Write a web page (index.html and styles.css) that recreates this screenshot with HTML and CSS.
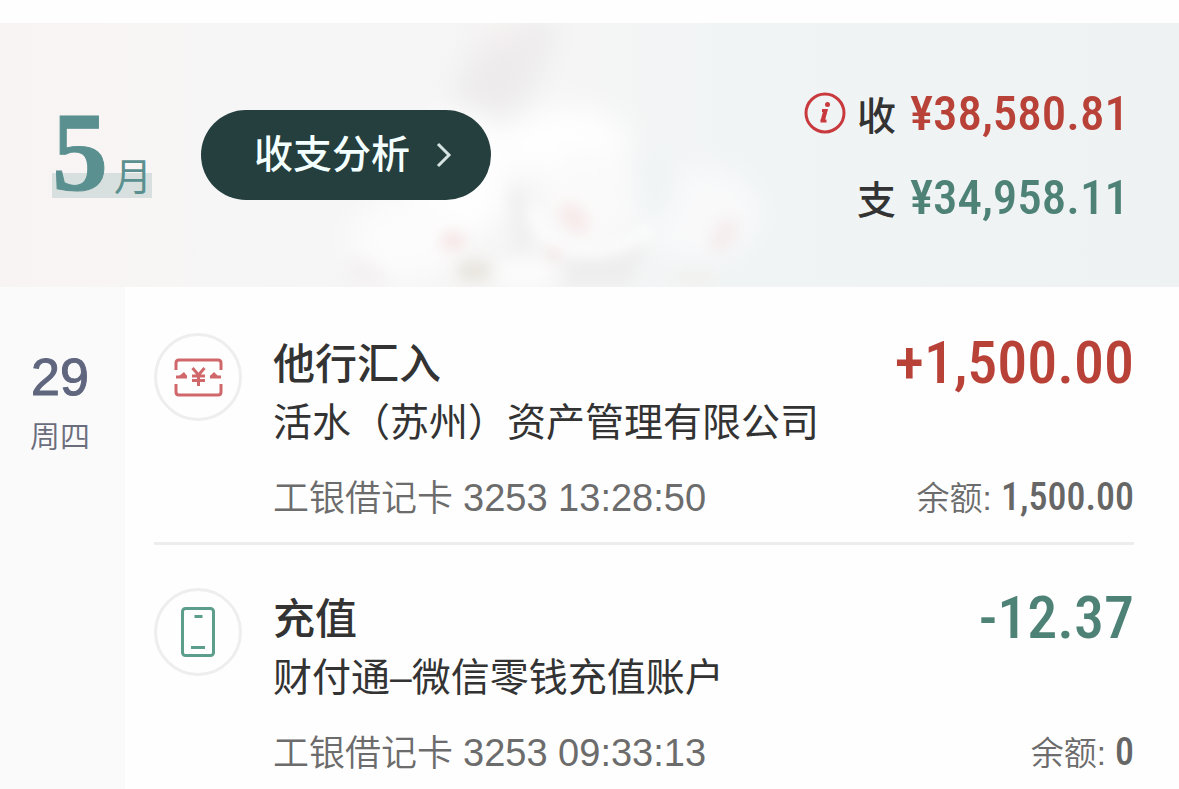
FILE: index.html
```html
<!DOCTYPE html>
<html lang="zh-CN">
<head>
<meta charset="utf-8">
<meta name="viewport" content="width=device-width, initial-scale=1">
<title>收支明细</title>
<link rel="stylesheet" href="styles.css">
</head>
<body>
<header class="summary">
  <svg class="flowers" viewBox="0 0 1179 264" preserveAspectRatio="none" aria-hidden="true">
    <defs>
      <filter id="soft" x="-50%" y="-50%" width="200%" height="200%"><feGaussianBlur stdDeviation="14"/></filter>
      <filter id="fine" x="-50%" y="-50%" width="200%" height="200%"><feGaussianBlur stdDeviation="7"/></filter>
    </defs>
    <g filter="url(#soft)">
      <path d="M490 0h70l-40 90-80 10z" fill="#edebec"/>
      <ellipse cx="500" cy="12" rx="22" ry="12" fill="#f7f0f1"/>
      <ellipse cx="460" cy="150" rx="50" ry="66" fill="#fefefe"/>
      <ellipse cx="565" cy="120" rx="64" ry="36" fill="#fefefe"/>
      <ellipse cx="405" cy="215" rx="55" ry="42" fill="#fdfcfc"/>
      <ellipse cx="590" cy="175" rx="50" ry="48" fill="#fbfafa"/>
      <ellipse cx="700" cy="190" rx="60" ry="45" fill="#f9f9fa"/>
      <ellipse cx="655" cy="165" rx="18" ry="34" fill="#edf3f4"/>
    </g>
    <g filter="url(#fine)">
      <path d="M510 165l14 0 8 60-18 10z" fill="#f1f0f1"/>
      <path d="M570 228l78-10-18 46h-66z" fill="#eeeeef"/>
      <ellipse cx="453" cy="218" rx="13" ry="10" fill="#f6e6e6"/>
      <ellipse cx="574" cy="195" rx="18" ry="12" fill="#f7eaea" transform="rotate(45 574 195)"/>
      <ellipse cx="555" cy="230" rx="9" ry="7" fill="#f3e4e4"/>
      <ellipse cx="724" cy="212" rx="12" ry="20" fill="#f5edee" transform="rotate(30 724 212)"/>
      <ellipse cx="474" cy="248" rx="18" ry="11" fill="#e9e6df"/>
      <ellipse cx="695" cy="255" rx="22" ry="8" fill="#f2f1ee"/>
      <path d="M350 235q30 5 40 25h-42z" fill="#f4f1f2"/>
      <ellipse cx="525" cy="250" rx="30" ry="16" fill="#fcfbfb"/>
      <path d="M530 185q20 45 60 44t60-24" fill="none" stroke="#fefefe" stroke-width="10"/>
    </g>
  </svg>
  <h1 class="month"><span class="month-number">5</span><span class="month-unit">月</span></h1>
  <button class="analysis" type="button">收支分析
    <svg class="chevron" viewBox="0 0 16 26" aria-hidden="true"><path d="M2 2l11 11L2 24"/></svg>
  </button>
  <dl class="totals">
    <div class="total income">
      <dt><svg class="info" viewBox="0 0 42 42" aria-hidden="true"><circle cx="21" cy="21" r="19"/><path d="M18 18.500h4l-3 10.500M16.500 29h6"/><path d="M21.500 18l-3 11" stroke-width="4"/><circle class="dot" cx="23.500" cy="12.500" r="2.500"/></svg>收</dt>
      <dd>¥38,580.81</dd>
    </div>
    <div class="total expense">
      <dt>支</dt>
      <dd>¥34,958.11</dd>
    </div>
  </dl>
</header>
<main class="day">
  <div class="date"><span class="date-number">29</span><span class="date-week">周四</span></div>
  <ul class="entries">
    <li class="entry">
      <span class="badge">
        <svg class="icon income-icon" viewBox="0 0 88 88" aria-hidden="true"><path d="M22 37v-7q0-3 3-3h39q3 0 3 3v7M22 51v8q0 3 3 3h39q3 0 3-3v-8"/><path d="M22 44h11M56 44h11M38.500 35l6 7 6-7M38 43h13M38 47.500h13M44.500 42v11"/><path class="fill" d="M25 43l5-4 3 4zM56 43l4-4 4 4z"/></svg>
      </span>
      <div class="detail">
        <div class="line"><h2 class="title">他行汇入</h2><strong class="amount income">+1,500.00</strong></div>
        <p class="party">活水（苏州）资产管理有限公司</p>
        <div class="line meta"><span class="card">工银借记卡 <span class="digits">3253 13:28:50</span></span><span class="balance">余额: <b>1,500.00</b></span></div>
      </div>
    </li>
    <li class="entry">
      <span class="badge">
        <svg class="icon expense-icon" viewBox="0 0 88 88" aria-hidden="true"><rect x="28.500" y="20.500" width="31" height="47" rx="3"/><path d="M40.500 28.500h8M37 59.500h14"/></svg>
      </span>
      <div class="detail">
        <div class="line"><h2 class="title">充值</h2><strong class="amount expense">-12.37</strong></div>
        <p class="party">财付通–微信零钱充值账户</p>
        <div class="line meta"><span class="card">工银借记卡 <span class="digits">3253 09:33:13</span></span><span class="balance">余额: <b>0</b></span></div>
      </div>
    </li>
  </ul>
</main>
</body>
</html>
```

FILE: styles.css
```css
* { box-sizing: border-box; }

body {
  margin: 0;
  padding-top: 23px;
  min-height: 100vh;
  display: flex;
  flex-direction: column;
  background: #fefefe;
  color: #333;
  font-family: "Liberation Sans", "Noto Sans CJK SC", sans-serif;
}

h1, h2, p, dl, dd, ul { margin: 0; padding: 0; font-weight: 400; }

.summary {
  position: relative;
  display: flex;
  align-items: center;
  min-height: 264px;
  padding: 0 50px 0 52px;
  background: linear-gradient(90deg, #f9f4f4 0, #f8f5f5 15%, #f6f6f6 17%, #f5f5f5 50%, #f0f4f5 64%, #eef2f3 100%);
}

.flowers {
  position: absolute;
  inset: 0;
  width: 100%;
  height: 100%;
}

.month, .analysis, .totals { position: relative; }

.month {
  display: flex;
  align-items: baseline;
  justify-content: space-between;
  width: 100px;
  height: 86px;
  line-height: 80px;
  color: #5b9090;
  background: linear-gradient(#d7e0de, #d7e0de) bottom / 100% 25px no-repeat;
}

.month-number {
  font-family: "Liberation Serif", serif;
  font-size: 112px;
  font-weight: 700;
  -webkit-text-stroke: 1px #5b9090;
}

.month-unit {
  font-family: "Noto Sans CJK SC", sans-serif;
  font-size: 38px;
  font-weight: 400;
}

.analysis {
  display: flex;
  align-items: center;
  gap: 26px;
  height: 90px;
  margin-left: 49px;
  padding: 0 39px 0 53px;
  border: 0;
  border-radius: 45px;
  background: #253f3e;
  color: #f4ffff;
  font: 500 39px/60px "Liberation Sans", "Noto Sans CJK SC", sans-serif;
}

.chevron {
  width: 16px;
  height: 26px;
  fill: none;
  stroke: #d5e3e2;
  stroke-width: 3;
}

.totals { margin-left: auto; }

.total {
  display: flex;
  justify-content: flex-end;
  align-items: center;
  gap: 14px;
  height: 84px;
}

.total dt {
  display: flex;
  align-items: center;
  gap: 11px;
  font: 500 39px/60px "Noto Sans CJK SC", sans-serif;
}

.total dd, .amount, .balance b {
  font-family: "Roboto Condensed", Roboto, sans-serif;
  font-weight: 500;
}

.total dd { font-size: 49px; }

.income { color: #b94238; }
.expense { color: #4e8276; }
.total dt { color: #333; }

.info {
  width: 42px;
  height: 42px;
  fill: none;
  stroke: #c93a3e;
  stroke-width: 3;
}

.info .dot { fill: #c93a3e; stroke: none; }

.day {
  flex: 1;
  display: flex;
}

.date {
  display: flex;
  flex-direction: column;
  align-items: center;
  flex: 0 0 125px;
  padding: 60px 5px 0 0;
  background: #fafafb;
  color: #5f667e;
}

.date-number {
  font-size: 52px;
  line-height: 60px;
  -webkit-text-stroke: 1px #5f667e;
}

.date-week {
  font-size: 30px;
  line-height: 60px;
  color: #6a6d7c;
  font-weight: 350;
}

.entries {
  flex: 1;
  padding: 3px 45px 0 29px;
  list-style: none;
}

.entry {
  display: flex;
  gap: 31px;
  padding: 43px 0 14px;
  border-bottom: 3px solid #ededee;
}

.entry:last-child { border-bottom: 0; padding-bottom: 0; }

.badge {
  flex: none;
  width: 88px;
  height: 88px;
  border: 3px solid #efeeef;
  border-radius: 50%;
}

.icon {
  display: block;
  width: 88px;
  height: 88px;
  margin: -3px;
  fill: none;
  stroke-width: 3;
}

.income-icon { stroke: #d0686b; }
.income-icon .fill { fill: #d0686b; stroke: none; }
.expense-icon { stroke: #5d9d8c; }

.detail { flex: 1; line-height: 60px; }

.line {
  display: flex;
  justify-content: space-between;
  align-items: center;
  height: 60px;
}

.title {
  padding-bottom: 4px;
  font-family: "Noto Sans CJK SC", sans-serif;
  font-size: 42px;
  font-weight: 500;
}

.party { font-size: 39px; color: #333; }

.amount { font-size: 60px; }

.meta {
  margin-top: 15px;
  color: #6c6c6c;
}

.card { font-size: 36px; font-weight: 350; }
.digits { font-size: 38px; }
.balance { font-size: 33px; font-weight: 350; }
.balance b { font-size: 38px; color: #666; }
```
